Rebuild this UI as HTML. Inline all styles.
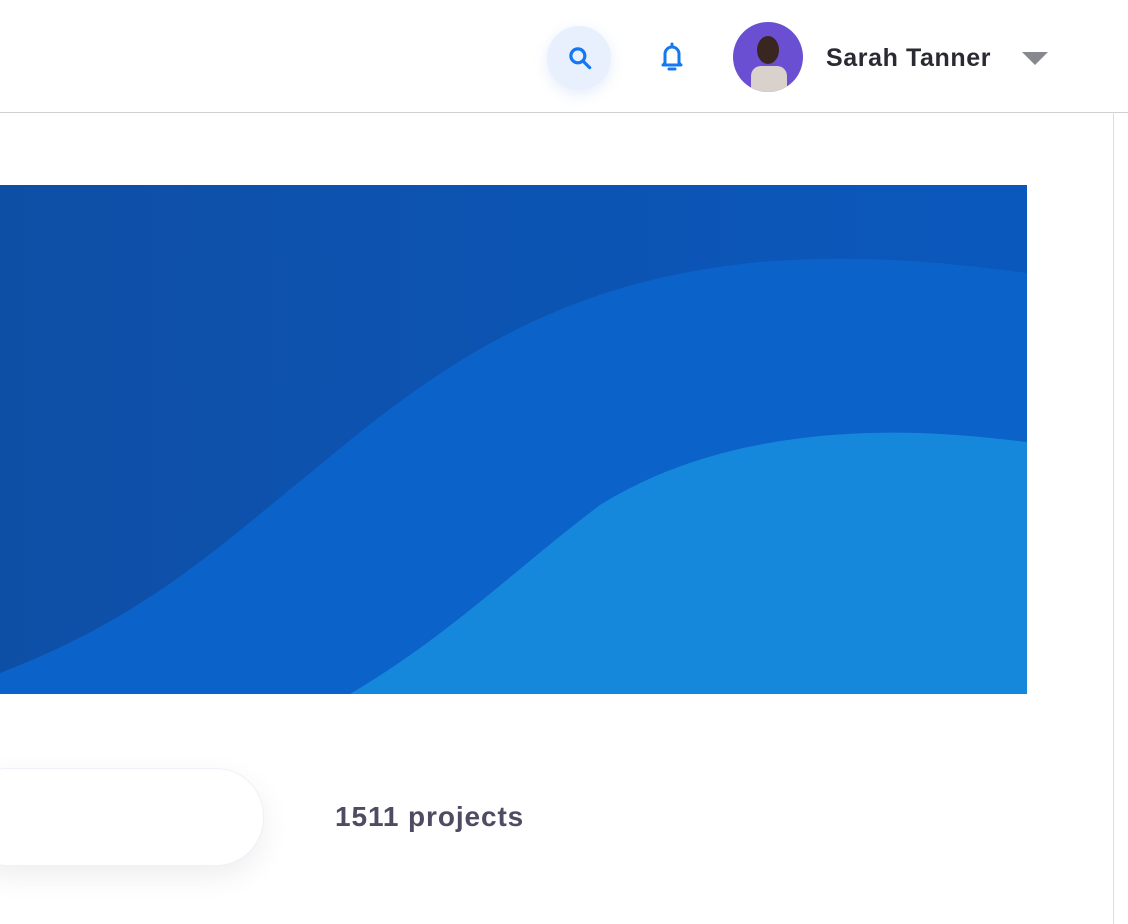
<!DOCTYPE html>
<html><head><style>
body{margin:0;width:1128px;height:924px;background:#fff;overflow:hidden;position:relative;font-family:"Liberation Sans",sans-serif}
.hdr{position:absolute;left:0;top:0;width:1128px;height:112px;border-bottom:1px solid #cfcfd4;background:#fff}
.rb{position:absolute;left:1113px;top:112px;width:1px;height:812px;background:#dcdce0}
.srch{position:absolute;left:547px;top:26px;width:64px;height:64px;border-radius:50%;background:#e8f0fd;box-shadow:0 4px 14px rgba(80,130,220,.15)}
.av{position:absolute;left:733px;top:22px;width:70px;height:70px;border-radius:50%;background:#6a4fd2;overflow:hidden}
.name{position:absolute;left:826px;top:44px;font-size:25px;font-weight:bold;color:#2a2a33;letter-spacing:0.6px}
.pill{position:absolute;left:-40px;top:768px;width:302px;height:96px;border-radius:48px;background:#fff;border:1px solid #eef0fb;box-shadow:0 10px 30px rgba(0,0,0,.07)}
.cnt{position:absolute;left:335px;top:801px;font-size:28px;font-weight:bold;color:#4e4b63;letter-spacing:0.9px}
</style></head><body>
<div class="hdr"></div><div class="rb"></div>
<div class="srch"></div>
<svg style="position:absolute;left:565px;top:43px" width="30" height="30" viewBox="0 0 28 28"><circle cx="12" cy="12" r="6.5" fill="none" stroke="#1677f2" stroke-width="3"/><path d="M17 17 L23 23" stroke="#1677f2" stroke-width="3" stroke-linecap="round"/></svg>
<svg style="position:absolute;left:658px;top:41px" width="28" height="32" viewBox="0 0 28 32"><path d="M7 22 V13 a7 7 0 0 1 14 0 V22 L23 24 H5 Z" fill="none" stroke="#1677f2" stroke-width="3" stroke-linejoin="round"/><path d="M14 3 V6 M11 28 H17" stroke="#1677f2" stroke-width="3" stroke-linecap="round"/></svg>
<div class="av"><div style="position:absolute;left:18px;top:44px;width:36px;height:30px;background:#d9d2cc;border-radius:10px 10px 0 0"></div><div style="position:absolute;left:24px;top:14px;width:22px;height:28px;background:#3a2620;border-radius:50%"></div></div>
<div class="name">Sarah Tanner</div>
<svg style="position:absolute;left:1022px;top:52px" width="26" height="14"><path d="M0 0 H26 L13 13 Z" fill="#88888f"/></svg>
<svg style="position:absolute;left:0;top:185px" width="1027" height="509" viewBox="0 0 1027 509">
<defs><linearGradient id="g" x1="0" y1="0" x2="1" y2="0"><stop offset="0" stop-color="#0e4fa6"/><stop offset="1" stop-color="#0b58bd"/></linearGradient></defs>
<rect width="1027" height="509" fill="url(#g)"/>
<path d="M0 488 C150 430 220 360 320 280 C450 170 570 95 760 77 C880 68 960 80 1027 88 V509 H0 Z" fill="#0b62c9"/>
<path d="M350 509 C450 450 520 380 600 320 C700 258 820 245 920 248 C970 250 1000 254 1027 257 V509 Z" fill="#1688db"/>
</svg>
<div class="pill"></div>
<div class="cnt">1511 projects</div>
</body></html>
